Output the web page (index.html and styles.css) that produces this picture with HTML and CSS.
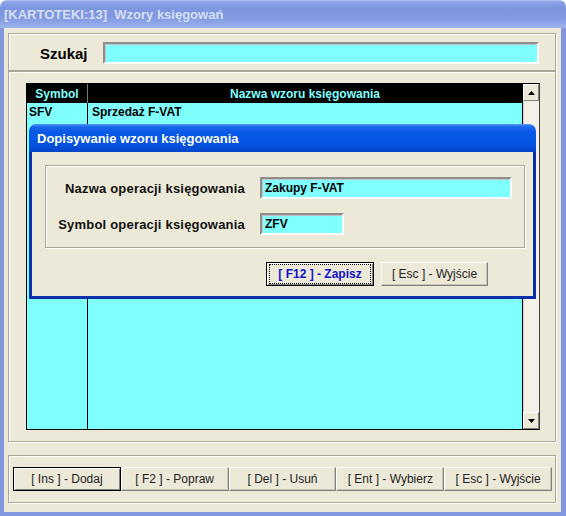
FILE: index.html
```html
<!DOCTYPE html>
<html lang="pl">
<head>
<meta charset="utf-8">
<title>Wzory księgowań</title>
<link rel="stylesheet" href="styles.css">
</head>
<body>
<div class="window">
  <div class="titlebar">[KARTOTEKI:13]&nbsp; Wzory księgowań</div>
  <div class="frame">
    <div class="panel search">
      <span class="search-label">Szukaj</span>
      <div class="field search-field"></div>
    </div>
    <div class="panel list-panel">
      <div class="listbox">
        <div class="grid">
          <div class="hcell c1">Symbol</div>
          <div class="hcell c2">Nazwa wzoru księgowania</div>
          <div class="cell c1">SFV</div>
          <div class="cell c2">Sprzedaż F-VAT</div>
          <div class="cell c1"></div>
          <div class="cell c2"></div>
        </div>
        <div class="scrollbar">
          <div class="sbtn"><svg width="7" height="4" viewBox="0 0 7 4"><path d="M3.5 0 L7 4 L0 4 Z" fill="#000"/></svg></div>
          <div class="track"></div>
          <div class="sbtn"><svg width="7" height="4" viewBox="0 0 7 4"><path d="M0 0 L7 0 L3.5 4 Z" fill="#000"/></svg></div>
        </div>
      </div>
    </div>
    <div class="panel buttons">
      <div class="btn default"><span>[ Ins ] - Dodaj</span></div>
      <div class="btn"><span>[ F2 ] - Popraw</span></div>
      <div class="btn"><span>[ Del ] - Usuń</span></div>
      <div class="btn"><span>[ Ent ] - Wybierz</span></div>
      <div class="btn"><span>[ Esc ] - Wyjście</span></div>
    </div>
  </div>

  <div class="dialog">
    <div class="dlg-title">Dopisywanie wzoru księgowania</div>
    <div class="dlg-body">
      <div class="group">
        <div class="form">
          <span class="flabel">Nazwa operacji księgowania</span>
          <div class="field dlg-field wide">Zakupy F-VAT</div>
          <span class="flabel">Symbol operacji księgowania</span>
          <div class="field dlg-field short">ZFV</div>
        </div>
      </div>
      <div class="dlg-buttons">
        <div class="btn default save"><span class="focus">[ F12 ] - Zapisz</span></div>
        <div class="btn dlg-btn"><span>[ Esc ] - Wyjście</span></div>
      </div>
    </div>
  </div>
</div>
</body>
</html>
```
FILE: styles.css
```css
* { box-sizing: border-box; }

body {
  margin: 0;
  width: 566px;
  height: 516px;
  background: #ffffff;
  font-family: "Liberation Sans", Arial, sans-serif;
  overflow: hidden;
}

.window {
  position: relative;
  width: 566px;
  height: 516px;
  background: #ece9d8;
  display: flex;
  flex-direction: column;
  border-radius: 7px 7px 0 0;
  overflow: hidden;
}

.titlebar {
  height: 28px;
  flex: none;
  display: flex;
  align-items: center;
  padding: 1px 0 0 4px;
  font-size: 13px;
  font-weight: bold;
  color: #d6e0f6;
  background: linear-gradient(to bottom, #b3c3f2 0px, #8ba2e6 2px, #7d96e0 8px, #8199e2 18px, #97adea 26px, #a4b8ee 28px);
}

.frame {
  flex: 1;
  display: flex;
  flex-direction: column;
  border-left: 4px solid #8198e0;
  border-right: 5px solid #8198e0;
  border-bottom: 4px solid #8198e0;
  padding: 5px 5px 9px 4px;
}

.panel {
  border: 1px solid #aca899;
  box-shadow: inset 1px 1px 0 #ffffff, 1px 1px 0 #ffffff;
}

/* search */
.search {
  height: 38px;
  flex: none;
  display: flex;
  align-items: center;
  padding: 2px 16px 0 31px;
}
.search-label {
  font-size: 15px;
  font-weight: bold;
  color: #000;
  width: 63px;
  flex: none;
}
.field {
  background: #80ffff;
  border: 2px solid;
  border-color: #8e8e8e #ffffff #ffffff #8e8e8e;
  box-shadow: inset 1px 1px 0 #c4c4c4;
}
.search-field {
  flex: 1;
  height: 22px;
}

/* list */
.list-panel {
  flex: 1;
  padding: 11px 15px 11px 17px;
  display: flex;
}
.listbox {
  flex: 1;
  display: flex;
}
.grid {
  flex: 1;
  display: grid;
  grid-template-columns: 61px 1fr;
  grid-template-rows: 19px 17px 1fr;
  background: #80ffff;
  border: 1px solid #000;
}
.hcell {
  background: #000;
  color: #80ffff;
  font-size: 12px;
  font-weight: bold;
  display: flex;
  align-items: center;
  justify-content: center;
  padding-top: 1px;
}
.hcell.c1 { border-right: 1px solid #7a7a7a; }
.cell {
  font-size: 12px;
  font-weight: bold;
  color: #000;
  display: flex;
  align-items: center;
}
.cell.c1 { border-right: 1px solid #000; padding-left: 2px; }
.cell.c2 { padding-left: 4px; }

.scrollbar {
  width: 17px;
  flex: none;
  display: flex;
  flex-direction: column;
  border-top: 1px solid #000;
  border-bottom: 1px solid #000;
  border-right: 1px solid #404040;
  background: #f3f1e8;
}
.sbtn {
  height: 17px;
  flex: none;
  display: flex;
  align-items: center;
  justify-content: center;
  background: #ece9d8;
  border: 1px solid;
  border-color: #ffffff #808080 #808080 #ffffff;
}
.track { flex: 1; border-left: 1px solid #d8d4c4; }

/* buttons */
.buttons {
  height: 48px;
  flex: none;
  margin-top: 13px;
  display: flex;
  align-items: flex-start;
  padding: 11px 3px 0 4px;
}
.btn {
  height: 24px;
  display: flex;
  align-items: center;
  justify-content: center;
  font-size: 12px;
  color: #222;
  background: #ece9d8;
  white-space: nowrap;
  border: 1px solid;
  border-color: #ffffff #7f7f7f #7f7f7f #ffffff;
  box-shadow: inset -1px -1px 0 #c9c5b4;
}
.buttons .btn { flex: 1; }
.btn.default {
  border: 1px solid #000;
  box-shadow: inset 1px 1px 0 #ffffff, inset -1px -1px 0 #808080;
}

/* dialog */
.dialog {
  position: absolute;
  left: 29px;
  top: 124px;
  width: 507px;
  height: 175px;
  display: flex;
  flex-direction: column;
}
.dlg-title {
  height: 28px;
  flex: none;
  border-radius: 7px 7px 0 0;
  display: flex;
  align-items: center;
  padding: 1px 0 0 8px;
  font-size: 13px;
  font-weight: bold;
  color: #ffffff;
  background: linear-gradient(to bottom, #4f97f7 0px, #1a66ea 3px, #0758e6 8px, #0456e4 16px, #0350dc 22px, #0443c6 28px);
}
.dlg-body {
  flex: 1;
  background: #ece9d8;
  border: 3px solid #0a2faa;
  border-top: none;
  padding: 13px 8px 0 13px;
}
.group {
  height: 83px;
  border: 1px solid #aca899;
  box-shadow: inset 1px 1px 0 #ffffff, 1px 1px 0 #ffffff;
  padding: 11px 0 0 0;
}
.form {
  display: grid;
  grid-template-columns: 199px auto;
  column-gap: 15px;
  row-gap: 14px;
  align-items: center;
  justify-items: start;
}
.flabel {
  justify-self: end;
  font-size: 13px;
  font-weight: bold;
  color: #111;
  letter-spacing: 0.2px;
  white-space: nowrap;
}
.dlg-field {
  height: 22px;
  font-size: 12px;
  font-weight: bold;
  color: #000;
  display: flex;
  align-items: center;
  padding-left: 3px;
}
.dlg-field.wide { width: 252px; }
.dlg-field.short { width: 84px; }

.dlg-buttons {
  display: flex;
  gap: 7px;
  margin-top: 14px;
  padding-left: 221px;
}
.dlg-buttons .btn { width: 108px; }
.dlg-buttons .dlg-btn { width: 107px; }
.save {
  font-weight: bold;
  color: #1010c8;
}
.focus {
  outline: 1px dotted #000;
  padding: 2px 0;
  width: 100px;
  text-align: center;
  white-space: nowrap;
}
```
